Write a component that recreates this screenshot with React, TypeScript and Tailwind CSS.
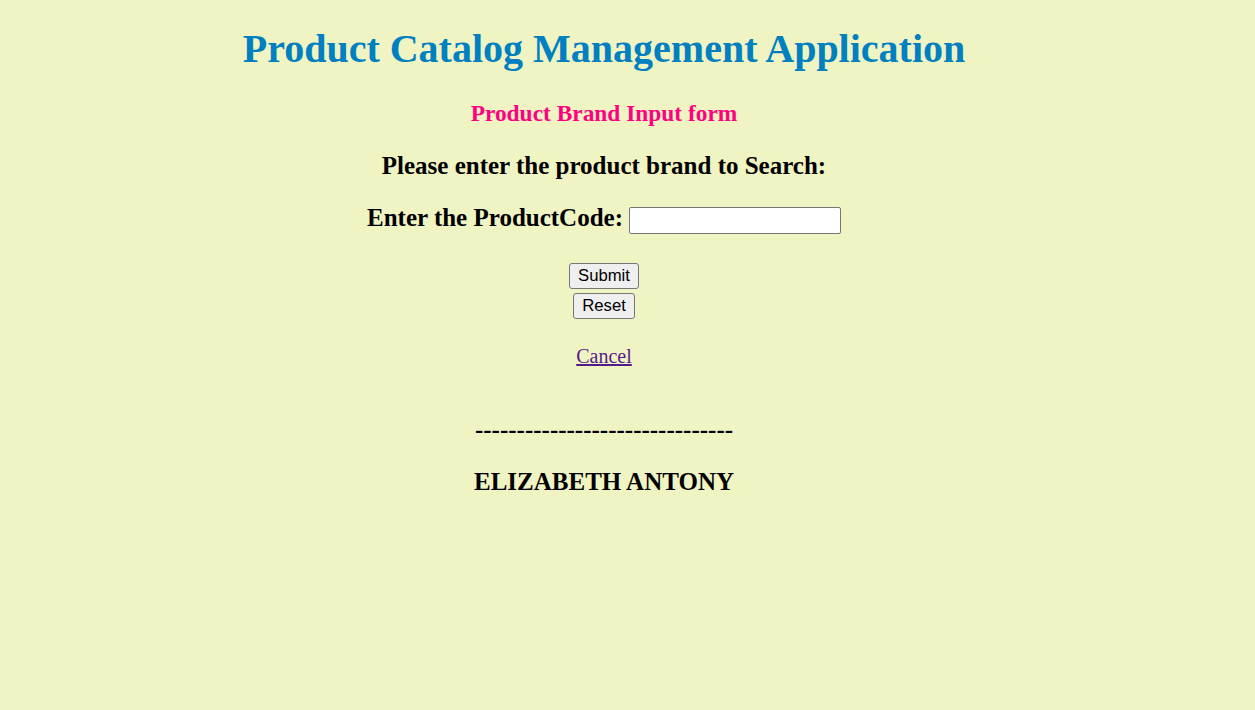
export default function App() {
  return (
    <div className="min-h-[710px] bg-[#f0f4c3] font-['Liberation_Serif',serif] text-black">
      <div className="flex w-[1208px] flex-col items-center pt-[26px] text-center">
        <h1 className="text-[40px] font-bold leading-[46px] text-[#0080c0]">
          Product Catalog Management Application
        </h1>
        <h3 className="mt-[28px] text-[23.4px] font-bold leading-[27px] text-[#ff0080]">
          Product Brand Input form
        </h3>
        <h2 className="mt-[24px] text-[25px] font-bold leading-[30px]">
          Please enter the product brand to Search:
        </h2>
        <form className="mt-[22px] flex flex-col items-center">
          <label className="flex items-start gap-[6px] text-[25px] font-bold leading-[30px]">
            Enter the ProductCode:
            <input
              type="text"
              className="mt-[4px] h-[27px] w-[212px] rounded-[2px] border border-[#767676] bg-white px-1 font-['Liberation_Sans',sans-serif] text-[16px] font-normal"
            />
          </label>
          <button
            type="button"
            className="mt-[29px] h-[26px] rounded-[3px] border border-[#767676] bg-[#efefef] px-[8px] font-['Liberation_Sans',sans-serif] text-[16.7px] leading-[20px]"
          >
            Submit
          </button>
          <button
            type="reset"
            className="mt-[4px] h-[26px] rounded-[3px] border border-[#767676] bg-[#efefef] px-[8px] font-['Liberation_Sans',sans-serif] text-[16.7px] leading-[20px]"
          >
            Reset
          </button>
        </form>
        <a href="#" className="mt-[25px] text-[20px] leading-[24px] text-[#551a8b] underline">
          Cancel
        </a>
        <p className="mt-[47px] text-[25px] font-bold leading-[30px]">-------------------------------</p>
        <h2 className="mt-[22px] text-[25px] font-bold leading-[30px]">ELIZABETH ANTONY</h2>
      </div>
    </div>
  );
}
